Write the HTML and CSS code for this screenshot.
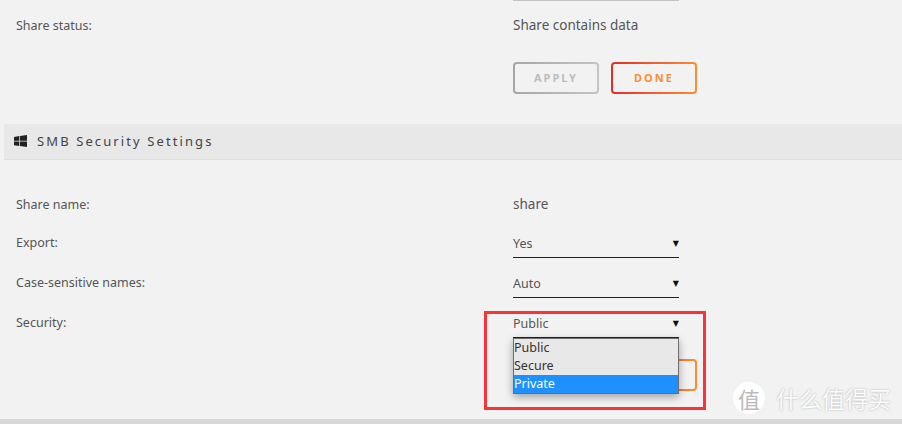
FILE: index.html
```html
<!DOCTYPE html>
<html>
<head>
	<title>SMB Security Settings</title>
	<meta charset="utf-8">
	<link rel="stylesheet" href="styles.css">
</head>
<body>
<div class="topLine"></div>

<div class="row rowFirst">
	<div class="label">Share status:</div>
	<div class="value">Share contains data</div>
</div>
<div class="buttons">
	<button class="btn btnApply">APPLY</button>
	<button class="btn btnDone">DONE</button>
</div>

<!-- section header -->
<div class="sectionBar">
	<svg class="winIcon" viewBox="0 0 13 12" width="13" height="12">
		<path d="M0 1.9 5.3 1.1V5.7H0ZM6 1 13 0V5.7H6ZM0 6.4H5.3V11L0 10.2ZM6 6.4H13V12L6 11Z" fill="#222"/>
	</svg>
	<span>SMB Security Settings</span>
</div>

<div class="row rowName">
	<div class="label">Share name:</div>
	<div class="value">share</div>
</div>
<div class="row">
	<div class="label">Export:</div>
	<div class="select"><span>Yes</span><i>▼</i></div>
</div>
<div class="row">
	<div class="label">Case-sensitive names:</div>
	<div class="select"><span>Auto</span><i>▼</i></div>
</div>
<div class="row">
	<div class="label">Security:</div>
	<div class="select">
		<span>Public</span><i>▼</i>
		<ul class="dropdown">
			<li>Public</li>
			<li>Secure</li>
			<li class="selected">Private</li>
		</ul>
		<div class="redBox"></div>
	</div>
</div>
<div class="buttons buttonsLast">
	<button class="btn btnDone btnHidden">DONE</button>
</div>

<div class="footerBand"></div>

<div class="watermark">
	<span class="wmCircle">值</span>
	<span class="wmText">什么值得买</span>
</div>
</body>
</html>
```

FILE: styles.css
```css
html,body{
	padding: 0;
	margin: 0;
	height: 100%;
	overflow: hidden;
}

body{
	background-color: #f2f2f2;
	color: #555;
	font-family: "Noto Sans", "Noto Sans CJK SC", sans-serif;
	font-size: 12.5px;
	position: relative;
}

.topLine{
	height: 1px;
	width: 166px;
	margin-left: 513px;
	background-color: #c4c4c4;
}

.row{
	display: flex;
	height: 40px;
	padding-left: 16px;
}
.rowFirst{
	height: 47px;
}
.rowName{
	margin-top: 24px;
	height: 39px;
}
.label{
	width: 497px;
	padding-top: 12px;
	line-height: 16px;
	flex: none;
}
.value{
	padding-top: 12px;
	line-height: 16px;
	font-size: 13.5px;
}
.rowFirst .label{
	padding-top: 17px;
}
.rowFirst .value{
	padding-top: 16px;
}
.rowName .label{
	padding-top: 13px;
}

.buttons{
	display: flex;
	gap: 12px;
	margin: 14px 0 30px 513px;
}
.buttonsLast{
	margin-top: 16px;
	margin-bottom: 0;
	margin-left: 611px;
}

.btn{
	width: 86px;
	height: 32px;
	padding: 0 0 2px;
	border: 2px solid transparent;
	border-radius: 4px;
	font-family: "Noto Sans", sans-serif;
	font-size: 11px;
	font-weight: 700;
	letter-spacing: 2px;
}
.btnApply{
	color: #bdbdbd;
	background: linear-gradient(#f2f2f2,#f2f2f2) padding-box, linear-gradient(90deg,#a6a6a6,#c4c4c4) border-box;
}
.btnDone{
	color: #ff8d30;
	background: linear-gradient(#f2f2f2,#f2f2f2) padding-box, linear-gradient(90deg,#e22d2d,#ff8d30) border-box;
}
/* sits behind the open dropdown, only its right edge shows */
.btnHidden{
	color: transparent;
}

.sectionBar{
	display: flex;
	align-items: center;
	gap: 10px;
	height: 33px;
	margin-left: 4px;
	padding-left: 10px;
	padding-bottom: 2px;
	background-color: #e8e8e8;
	border-bottom: 1px solid #e0e0e0;
	font-size: 13px;
	letter-spacing: 2.1px;
	color: #444;
}

.select{
	position: relative;
	display: flex;
	justify-content: space-between;
	align-items: center;
	box-sizing: border-box;
	width: 166px;
	height: 30px;
	margin-top: 5px;
	padding-top: 2px;
	border-bottom: 1px solid #222;
}
.select i{
	font-style: normal;
	font-family: "DejaVu Sans", sans-serif;
	font-size: 8px;
	color: #111;
}

.dropdown{
	position: absolute;
	top: 30px;
	left: 0;
	z-index: 5;
	width: 164px;
	margin: 0;
	padding: 0;
	list-style: none;
	background-color: #e8e8e8;
	border: 1px solid #6e6e6e;
	box-shadow: 0 3px 8px rgba(0,0,0,0.35);
	color: #333;
}
.dropdown li{
	height: 18px;
	line-height: 18px;
}
.dropdown .selected{
	background-color: #1e90ff;
	color: #fff;
}

.redBox{
	position: absolute;
	top: 3px;
	left: -29px;
	z-index: 6;
	width: 216px;
	height: 93px;
	border: 3px solid #f73538;
}

.footerBand{
	position: absolute;
	left: 0;
	right: 0;
	top: 419px;
	height: 5px;
	background-color: #d8d8d8;
}

.watermark{
	position: absolute;
	left: 733px;
	top: 381px;
	display: flex;
	align-items: center;
	gap: 11px;
}
.wmCircle{
	width: 32px;
	height: 32px;
	border-radius: 50%;
	background-color: #fff;
	color: #bbb;
	font-size: 22px;
	line-height: 32px;
	text-align: center;
	font-family: "Noto Sans CJK SC", sans-serif;
}
.wmText{
	font-family: "Noto Sans CJK SC", sans-serif;
	font-size: 23px;
	color: #fbfbfb;
	text-shadow: 0 0 2px #aaa;
}
```
